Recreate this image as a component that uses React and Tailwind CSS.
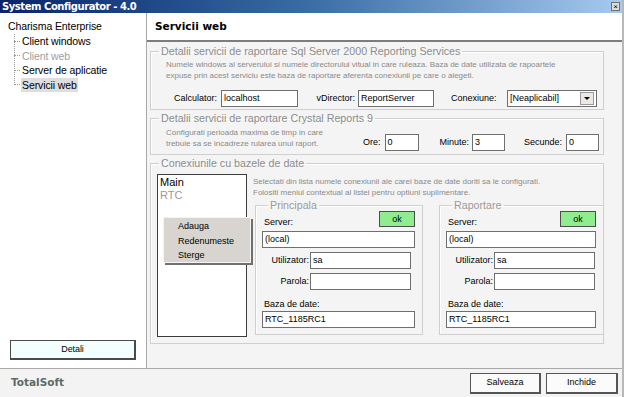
import React from "react";

const sans = "font-['Liberation_Sans',Arial,sans-serif]";
const verd = "font-['DejaVu_Sans',Verdana,sans-serif]";

function Input({ value = "", className = "" }) {
  return (
    <div className={`h-[17px] bg-white border border-[#6f6f6f] flex items-center px-[2px] text-[9px] text-black leading-none ${className}`}>
      {value}
    </div>
  );
}

function Group({ title, className = "", children }) {
  return (
    <fieldset className={`min-w-0 border border-[#cfcfcf] shadow-[inset_1px_1px_0_#fff] ${className}`}>
      <legend className="ml-[8px] px-[2px] text-[10.7px] leading-[13px] text-[#8c8c8c]">{title}</legend>
      {children}
    </fieldset>
  );
}

function TreeItem({ children, muted, selected }) {
  return (
    <div className="flex items-center h-[14.5px]">
      <div className="w-[6px] border-t border-dotted border-[#9a9a9a]" />
      <span
        className={`ml-[1px] px-[1px] leading-[14px] ${muted ? "text-[#a0a0a0]" : "text-black"} ${selected ? "bg-[#dedede]" : ""}`}
      >
        {children}
      </span>
    </div>
  );
}

function DbBox({ title, className = "" }) {
  return (
    <fieldset className={`min-w-0 border border-[#cfcfcf] shadow-[inset_1px_1px_0_#fff] pl-[6px] pr-[7px] pb-[6px] ${className}`}>
      <legend className="ml-[6px] px-[2px] text-[10.7px] leading-[13px] text-[#9a9a9a]">{title}</legend>
      <div className="flex items-end justify-between -mt-[1px]">
        <span className="text-[9px] leading-none ml-[2px]">Server:</span>
        <div className="w-[36px] h-[16px] bg-[#8fec8f] border border-[#4d4d4d] flex items-center justify-center text-[9px] leading-none">
          ok
        </div>
      </div>
      <Input value="(local)" className="mt-[4px]" />
      <div className="flex items-center mt-[4px]">
        <span className="w-[48px] text-right text-[9px] pr-[1px]">Utilizator:</span>
        <Input value="sa" className="w-[101px]" />
      </div>
      <div className="flex items-center mt-[4px]">
        <span className="w-[48px] text-right text-[9px] pr-[1px]">Parola:</span>
        <Input className="w-[101px]" />
      </div>
      <div className="text-[9px] leading-none mt-[10px] ml-[2px]">Baza de date:</div>
      <Input value="RTC_1185RC1" className="mt-[2px]" />
    </fieldset>
  );
}

export default function App() {
  return (
    <div className={`w-[624px] h-[397px] flex flex-col overflow-hidden bg-[#f1f1f1] border-r-2 border-[#b8b8b8] ${sans}`}>
      {/* title bar */}
      <div className="h-[13px] shrink-0 flex items-center justify-between bg-gradient-to-r from-[#0a246a] via-[#3a6ea5] to-[#a6caf0] pl-[2px] pr-[2px]">
        <span className={`text-white font-bold text-[10px] leading-none tracking-[-0.45px] ${verd}`}>System Configurator - 4.0</span>
        <div className="w-[9px] h-[9px] bg-[#dcdcdc] border border-[#707070] flex items-center justify-center text-[8px] leading-none text-black">
          ×
        </div>
      </div>

      <div className="flex h-[355px] shrink-0">
        {/* sidebar */}
        <aside className="w-[147px] shrink-0 bg-white border-r border-[#a8a8a8] flex flex-col text-[10.5px] tracking-[-0.1px]">
          <div className="pl-[8px] pt-[6px] leading-[14px] text-black">Charisma Enterprise</div>
          <div className="relative ml-[14px] mt-[1px]">
            <div className="absolute left-0 top-0 h-[51px] border-l border-dotted border-[#9a9a9a]" />
            <TreeItem>Client windows</TreeItem>
            <TreeItem muted>Client web</TreeItem>
            <TreeItem>Server de aplicatie</TreeItem>
            <TreeItem selected>Servicii web</TreeItem>
          </div>
          <div className="mt-auto mb-[8px] mx-[10px] h-[20px] bg-[#f3fffe] border border-[#4a4a4a] border-b-2 border-r-2 flex items-center justify-center text-[9px]">
            Detali
          </div>
        </aside>

        {/* main */}
        <main className="flex-1 min-w-0 flex flex-col">
          <div className="h-[29px] bg-white border-b-2 border-[#7d7d7d] flex items-center pl-[8px]">
            <span className={`font-bold text-[10.5px] text-black ${verd}`}>Servicii web</span>
          </div>
          <div className="flex-1 bg-[#f4f4f4] pl-[3px] pr-[18px] pt-[3px] flex flex-col">
            <Group title="Detalii servicii de raportare Sql Server 2000 Reporting Services" className="pb-[2px]">
              <div className="pl-[15px] text-[8px] leading-[11px] text-[#8a8a8a] mt-[1px]">
                <div>Numele windows al serverului si numele directorului vitual in care ruleaza. Baza de date utilizata de rapoartele</div>
                <div>expuse prin acest serviciu este baza de raportare aferenta conexiunii pe care o alegeti.</div>
              </div>
              <div className="flex items-center mt-[9px] text-[9px]">
                <span className="w-[70px] text-right pr-[4px]">Calculator:</span>
                <Input value="localhost" className="w-[77px]" />
                <span className="w-[60px] text-right pr-[3px]">vDirector:</span>
                <Input value="ReportServer" className="w-[76px]" />
                <span className="w-[73px] pl-[17px]">Conexiune:</span>
                <div className="w-[90px] h-[17px] bg-white border border-[#6f6f6f] flex items-center justify-between pl-[2px] pr-[2px]">
                  <span className="leading-none">[Neaplicabil]</span>
                  <div className="w-[14px] h-[13px] bg-[#ece9e3] border border-[#9a9a9a] flex items-center justify-center">
                    <div className="w-0 h-0 border-l-[3px] border-r-[3px] border-t-[3px] border-l-transparent border-r-transparent border-t-black" />
                  </div>
                </div>
              </div>
            </Group>

            <Group title="Detalii servicii de raportare Crystal Reports 9" className="mt-[2px] pb-[3px]">
              <div className="flex items-start">
                <div className="pl-[15px] w-[212px] text-[8px] leading-[11px] text-[#8a8a8a] mt-[2px]">
                  <div>Configurati perioada maxima de timp in care</div>
                  <div>trebuie sa se incadreze rularea unui raport.</div>
                </div>
                <div className="flex items-center mt-[9px] text-[9px]">
                  <span className="pr-[4px]">Ore:</span>
                  <Input value="0" className="w-[34px] h-[16px]" />
                  <span className="ml-[21px] pr-[3px]">Minute:</span>
                  <Input value="3" className="w-[33px] h-[16px]" />
                  <span className="ml-[19px] pr-[4px]">Secunde:</span>
                  <Input value="0" className="w-[33px] h-[16px]" />
                </div>
              </div>
            </Group>

            <Group title="Conexiunile cu bazele de date" className="mt-[2px] pb-[6px]">
              <div className="flex mt-[4px] pl-[6px]">
                <div className="relative w-[90px] h-[163px] shrink-0 bg-white border border-[#3c3c3c] text-[11px] leading-[13px] pl-[2px] pt-[1px]">
                  <div className="text-black">Main</div>
                  <div className="text-[#9a9a9a]">RTC</div>
                  <div className="absolute left-[5px] top-[42px] w-[88px] h-[46px] bg-[#d8d5d0] border border-[#f4f4f4] shadow-[2px_2px_0_#6f6f6f] text-[9px] leading-[14.5px] pl-[14px] pt-[1px] text-black z-10">
                    <div>Adauga</div>
                    <div>Redenumeste</div>
                    <div>Sterge</div>
                  </div>
                </div>
                <div className="ml-[6px] flex-1 min-w-0">
                  <div className="text-[8px] leading-[11px] text-[#8a8a8a] mt-[2px]">
                    <div>Selectati din lista numele conexiunii ale carei baze de date doriti sa le configurati.</div>
                    <div>Folositi meniul contextual al listei pentru optiuni suplimentare.</div>
                  </div>
                  <div className="flex mt-[1px] ml-[2px]">
                    <DbBox title="Principala" className="w-[168px] shrink-0" />
                    <DbBox title="Raportare" className="w-[165px] shrink-0 ml-[16px]" />
                  </div>
                </div>
              </div>
            </Group>
          </div>
        </main>
      </div>

      {/* footer */}
      <div className="h-[29px] shrink-0 border-t border-[#a8a8a8] bg-[#f3f3f3] flex items-center pl-[11px] pr-[4px]">
        <span className={`font-bold text-[10.5px] text-[#5d6b64] ${verd}`}>TotalSoft</span>
        <div className="ml-auto flex gap-[5px]">
          <div className="w-[71px] h-[21px] bg-[#fbfbfb] border border-[#555] border-b-2 border-r-2 flex items-center justify-center text-[9px]">
            Salveaza
          </div>
          <div className="w-[72px] h-[21px] bg-[#fbfbfb] border border-[#555] border-b-2 border-r-2 flex items-center justify-center text-[9px]">
            Inchide
          </div>
        </div>
      </div>
    </div>
  );
}
